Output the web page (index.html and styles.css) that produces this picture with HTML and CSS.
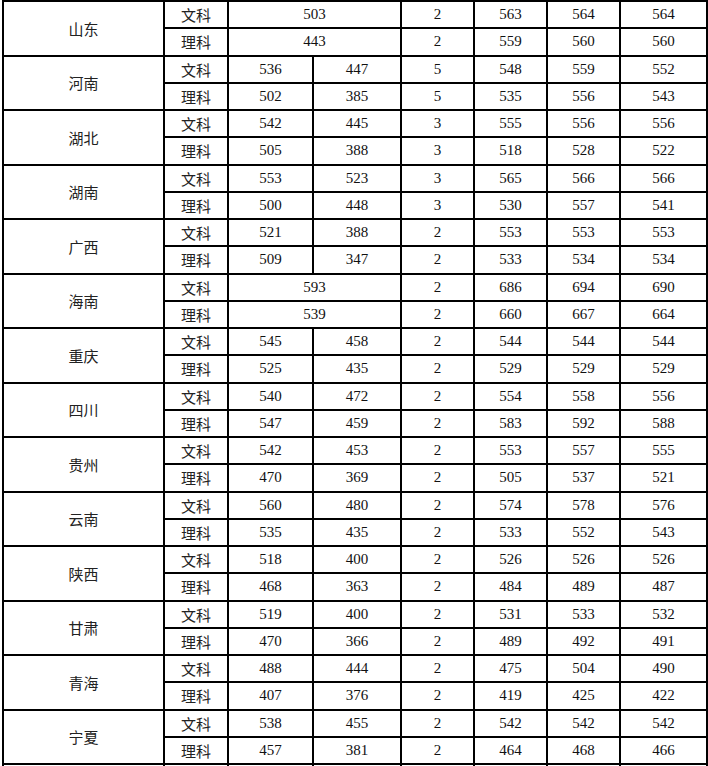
FILE: index.html
```html
<!DOCTYPE html>
<html lang="zh">
<head>
<meta charset="utf-8">
<title>分数线</title>
<link rel="stylesheet" href="styles.css">
</head>
<body>
<table class="scores">
<colgroup>
<col class="c-prov"><col class="c-type"><col class="c-a"><col class="c-b"><col class="c-n"><col class="c-s"><col class="c-s"><col class="c-last">
</colgroup>
<tbody>
<tr><td rowspan="2" class="prov">山东</td><td class="type">文科</td><td colspan="2">503</td><td>2</td><td>563</td><td>564</td><td>564</td></tr>
<tr><td class="type">理科</td><td colspan="2">443</td><td>2</td><td>559</td><td>560</td><td>560</td></tr>
<tr><td rowspan="2" class="prov">河南</td><td class="type">文科</td><td>536</td><td>447</td><td>5</td><td>548</td><td>559</td><td>552</td></tr>
<tr><td class="type">理科</td><td>502</td><td>385</td><td>5</td><td>535</td><td>556</td><td>543</td></tr>
<tr><td rowspan="2" class="prov">湖北</td><td class="type">文科</td><td>542</td><td>445</td><td>3</td><td>555</td><td>556</td><td>556</td></tr>
<tr><td class="type">理科</td><td>505</td><td>388</td><td>3</td><td>518</td><td>528</td><td>522</td></tr>
<tr><td rowspan="2" class="prov">湖南</td><td class="type">文科</td><td>553</td><td>523</td><td>3</td><td>565</td><td>566</td><td>566</td></tr>
<tr><td class="type">理科</td><td>500</td><td>448</td><td>3</td><td>530</td><td>557</td><td>541</td></tr>
<tr><td rowspan="2" class="prov">广西</td><td class="type">文科</td><td>521</td><td>388</td><td>2</td><td>553</td><td>553</td><td>553</td></tr>
<tr><td class="type">理科</td><td>509</td><td>347</td><td>2</td><td>533</td><td>534</td><td>534</td></tr>
<tr><td rowspan="2" class="prov">海南</td><td class="type">文科</td><td colspan="2">593</td><td>2</td><td>686</td><td>694</td><td>690</td></tr>
<tr><td class="type">理科</td><td colspan="2">539</td><td>2</td><td>660</td><td>667</td><td>664</td></tr>
<tr><td rowspan="2" class="prov">重庆</td><td class="type">文科</td><td>545</td><td>458</td><td>2</td><td>544</td><td>544</td><td>544</td></tr>
<tr><td class="type">理科</td><td>525</td><td>435</td><td>2</td><td>529</td><td>529</td><td>529</td></tr>
<tr><td rowspan="2" class="prov">四川</td><td class="type">文科</td><td>540</td><td>472</td><td>2</td><td>554</td><td>558</td><td>556</td></tr>
<tr><td class="type">理科</td><td>547</td><td>459</td><td>2</td><td>583</td><td>592</td><td>588</td></tr>
<tr><td rowspan="2" class="prov">贵州</td><td class="type">文科</td><td>542</td><td>453</td><td>2</td><td>553</td><td>557</td><td>555</td></tr>
<tr><td class="type">理科</td><td>470</td><td>369</td><td>2</td><td>505</td><td>537</td><td>521</td></tr>
<tr><td rowspan="2" class="prov">云南</td><td class="type">文科</td><td>560</td><td>480</td><td>2</td><td>574</td><td>578</td><td>576</td></tr>
<tr><td class="type">理科</td><td>535</td><td>435</td><td>2</td><td>533</td><td>552</td><td>543</td></tr>
<tr><td rowspan="2" class="prov">陕西</td><td class="type">文科</td><td>518</td><td>400</td><td>2</td><td>526</td><td>526</td><td>526</td></tr>
<tr><td class="type">理科</td><td>468</td><td>363</td><td>2</td><td>484</td><td>489</td><td>487</td></tr>
<tr><td rowspan="2" class="prov">甘肃</td><td class="type">文科</td><td>519</td><td>400</td><td>2</td><td>531</td><td>533</td><td>532</td></tr>
<tr><td class="type">理科</td><td>470</td><td>366</td><td>2</td><td>489</td><td>492</td><td>491</td></tr>
<tr><td rowspan="2" class="prov">青海</td><td class="type">文科</td><td>488</td><td>444</td><td>2</td><td>475</td><td>504</td><td>490</td></tr>
<tr><td class="type">理科</td><td>407</td><td>376</td><td>2</td><td>419</td><td>425</td><td>422</td></tr>
<tr><td rowspan="2" class="prov">宁夏</td><td class="type">文科</td><td>538</td><td>455</td><td>2</td><td>542</td><td>542</td><td>542</td></tr>
<tr><td class="type">理科</td><td>457</td><td>381</td><td>2</td><td>464</td><td>468</td><td>466</td></tr>
<tr class="cut"><td></td><td></td><td></td><td></td><td></td><td></td><td></td><td></td></tr>
</tbody>
</table>
</body>
</html>
```

FILE: styles.css
```css
html, body {
  margin: 0;
  padding: 0;
  background: #fff;
}
body {
  overflow: hidden;
}
.scores {
  margin: 0 0 0 2px;
  border-collapse: collapse;
  table-layout: fixed;
  width: 704px;
  font-family: "Liberation Serif", "Noto Sans CJK SC", serif;
  font-size: 15px;
  color: #111;
}
.c-prov { width: 161px; }
.c-type { width: 64px; }
.c-a { width: 85px; }
.c-b { width: 88px; }
.c-n { width: 73px; }
.c-s { width: 73px; }
.c-last { width: 87px; }
.scores td {
  border: 2px solid #000;
  height: 27.25px;
  padding: 0;
  text-align: center;
  vertical-align: middle;
  line-height: 1;
  box-sizing: border-box;
}
.scores .prov,
.scores .type {
  font-family: "Noto Sans CJK SC", sans-serif;
  font-size: 15px;
  color: #222;
}
.scores .cut td {
  height: 27px;
}
```
